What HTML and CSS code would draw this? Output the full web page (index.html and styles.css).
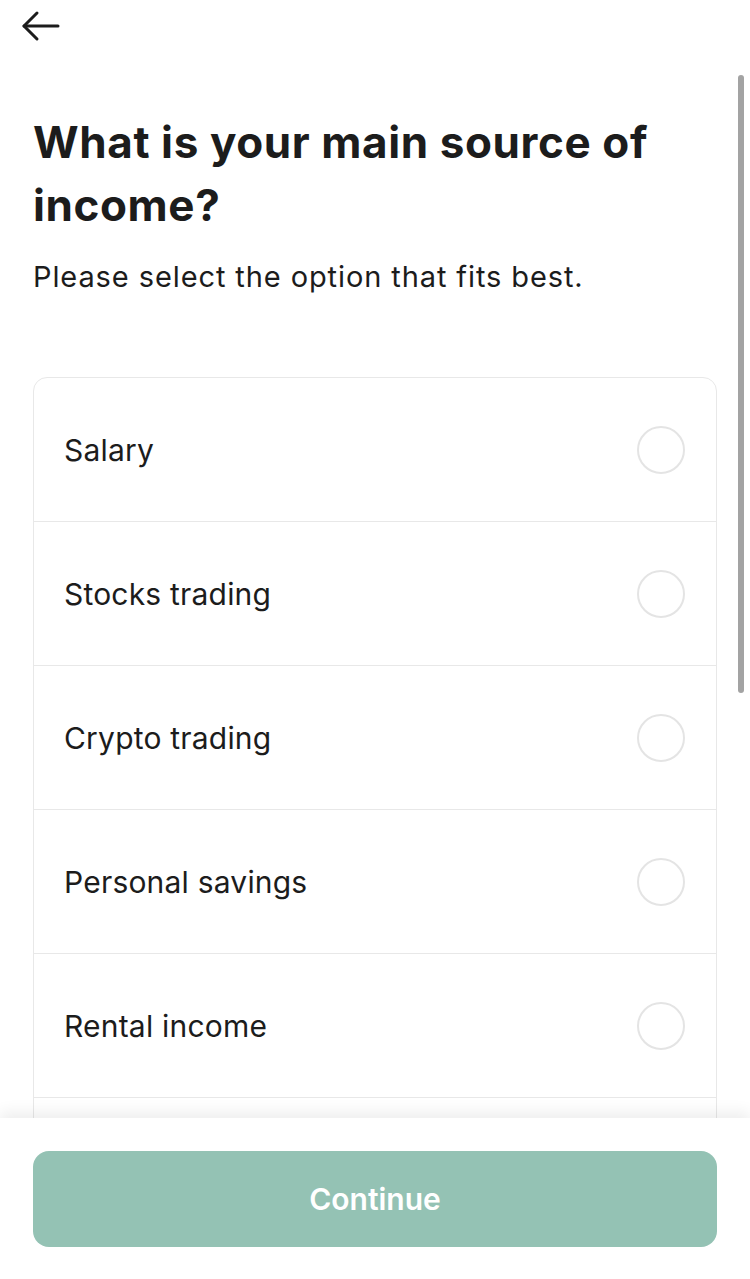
FILE: index.html
```html
<!DOCTYPE html>
<html lang="en">
<head>
  <meta charset="UTF-8" />
  <meta name="viewport" content="width=750, initial-scale=1.0">
  <title>Source of income</title>
  <link rel="stylesheet" href="styles.css">
</head>
<body>
  <div class="page">
    <main class="content">
      <button class="back" aria-label="Back">
        <svg width="40" height="32" viewBox="0 0 40 32" fill="none" stroke="#1c1c1c" stroke-width="3" stroke-linecap="round" stroke-linejoin="round">
          <path d="M38 16H4" />
          <path d="M17 3L4 16l13 13" />
        </svg>
      </button>

      <h1 class="title">What is your main source of income?</h1>
      <p class="subtitle">Please select the option that fits best.</p>

      <ul class="options">
        <li class="option"><span>Salary</span><span class="radio"></span></li>
        <li class="option"><span>Stocks trading</span><span class="radio"></span></li>
        <li class="option"><span>Crypto trading</span><span class="radio"></span></li>
        <li class="option"><span>Personal savings</span><span class="radio"></span></li>
        <li class="option"><span>Rental income</span><span class="radio"></span></li>
        <li class="option"></li>
      </ul>
    </main>

    <footer class="footer">
      <button class="continue" disabled>Continue</button>
    </footer>
  </div>

  <div class="scrollbar"></div>
</body>
</html>
```

FILE: styles.css
```css
:root {
  --text: #1c1c1c;
  --line: #e8e8e8;
  --radio: #e4e4e4;
  --button: #94c2b4;
}

* {
  box-sizing: border-box;
}

body {
  margin: 0;
  height: 100vh;
  overflow: hidden;
  position: relative;
  font-family: Inter, 'Noto Sans', sans-serif;
  color: var(--text);
  background: #ffffff;
}

.page {
  display: flex;
  flex-direction: column;
  height: 100vh;
}

.content {
  flex: 1;
  overflow: hidden;
  padding: 0 33px;
}

.back {
  display: block;
  margin: 10px 0 0 -13px;
  padding: 0;
  border: none;
  background: transparent;
  cursor: pointer;
}

.back svg {
  display: block;
}

.title {
  margin: 69px 0 0;
  font-size: 44px;
  line-height: 63px;
  font-weight: 700;
  letter-spacing: 0.6px;
  max-width: 660px;
}

.subtitle {
  margin: 20px 0 0;
  font-size: 29px;
  line-height: 40px;
  letter-spacing: 0.9px;
}

.options {
  list-style: none;
  margin: 80px 0 0;
  padding: 0;
  border: 1px solid var(--line);
  border-radius: 14px;
}

.option {
  display: flex;
  align-items: center;
  justify-content: space-between;
  height: 144px;
  padding: 0 31px 0 30px;
  font-size: 30px;
  letter-spacing: 0.2px;
  border-top: 1px solid var(--line);
}

.option:first-child {
  height: 143px;
  border-top: none;
}

.radio {
  width: 48px;
  height: 48px;
  border: 2px solid var(--radio);
  border-radius: 50%;
}

.footer {
  flex: none;
  height: 161px;
  padding: 33px 33px 0;
  background: #ffffff;
  box-shadow: 0 -6px 14px rgba(0, 0, 0, 0.07);
  position: relative;
}

.continue {
  display: block;
  width: 100%;
  height: 96px;
  border: none;
  border-radius: 16px;
  background: var(--button);
  color: #ffffff;
  font-family: inherit;
  font-size: 30px;
  font-weight: 600;
}

.scrollbar {
  position: absolute;
  top: 75px;
  right: 6px;
  width: 6px;
  height: 618px;
  border-radius: 3px;
  background: #a3a3a3;
}
```
